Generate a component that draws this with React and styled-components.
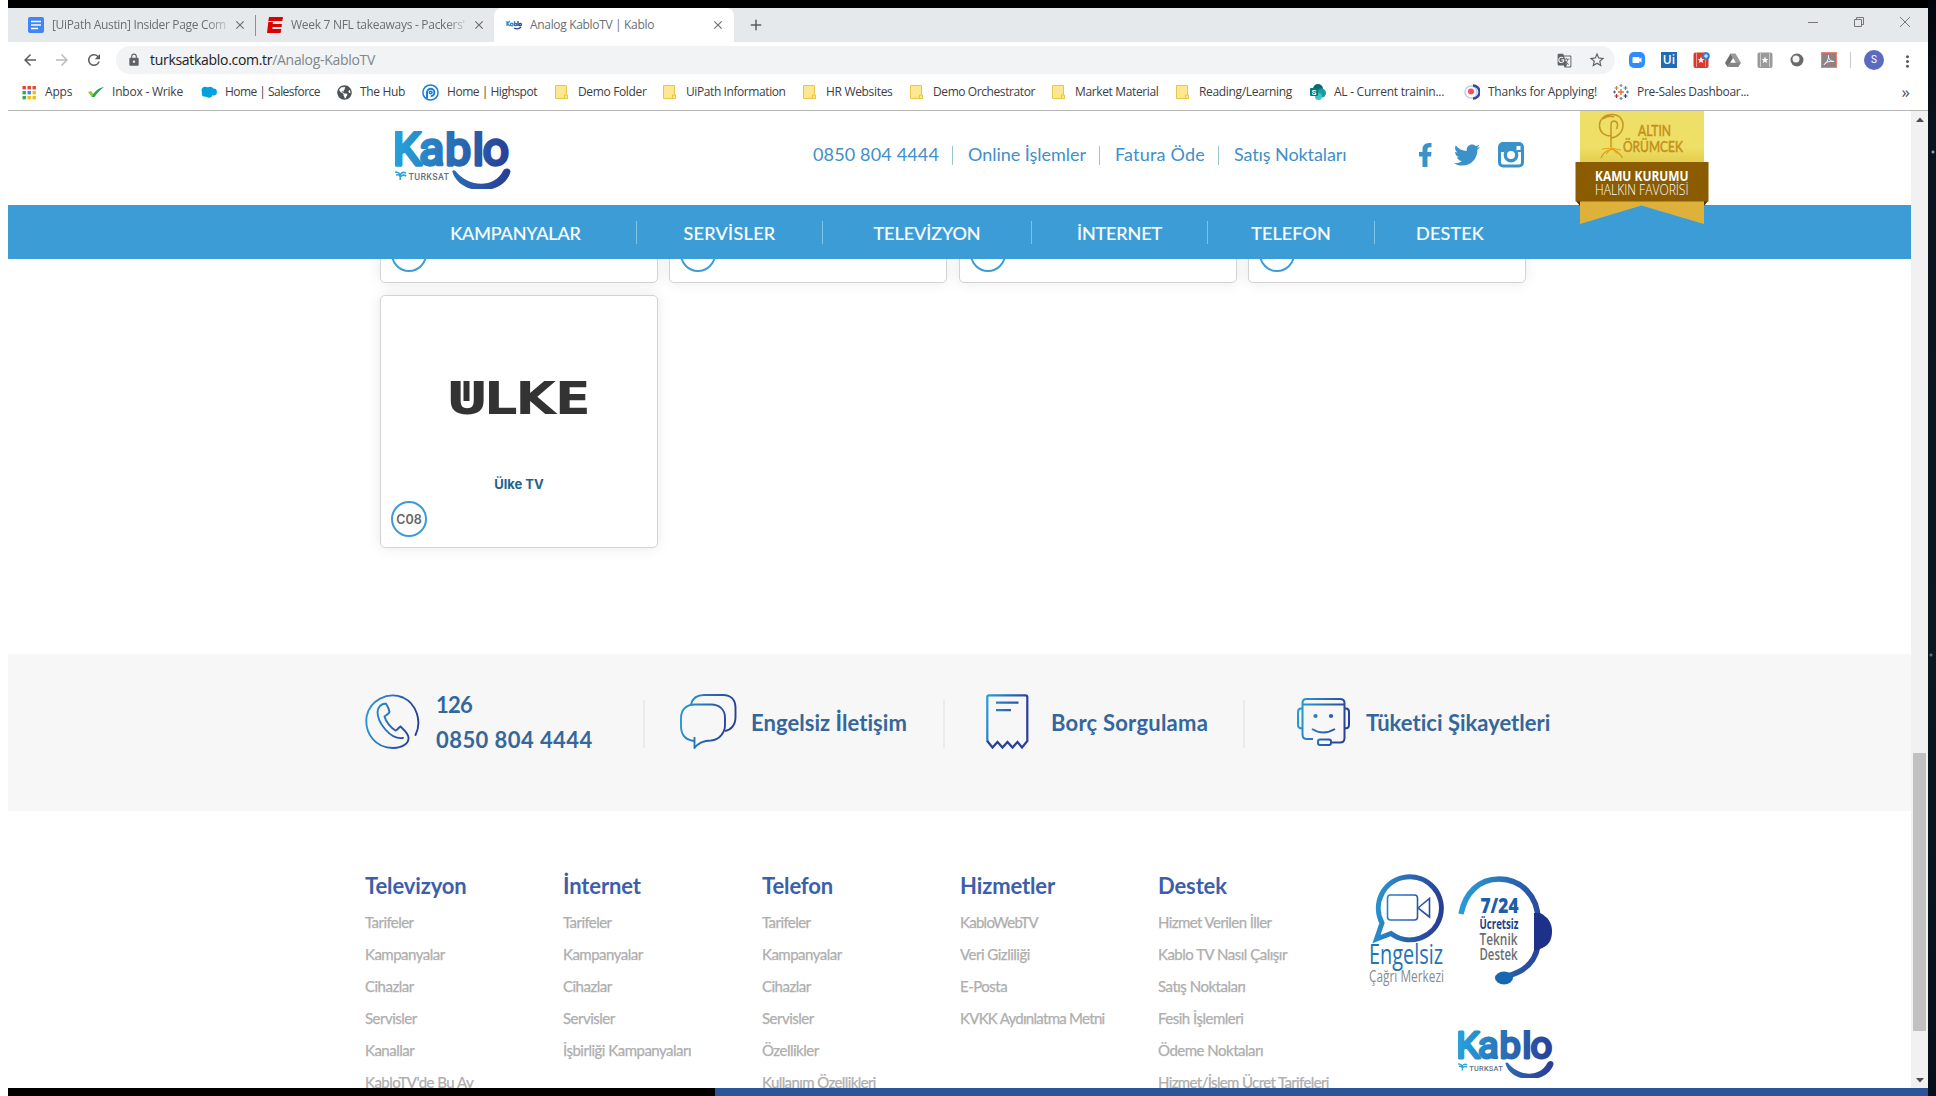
import React from "react";
import styled, { createGlobalStyle } from "styled-components";
import { FaTwitter, FaGlobeAmericas } from "react-icons/fa";
import { MdArrowBack, MdArrowForward, MdRefresh, MdLock, MdStarBorder, MdGTranslate, MdMoreVert, MdClose, MdAdd, MdVideocam } from "react-icons/md";

const ui = `"Open Sans", "Noto Sans", sans-serif`;
const site = `Lato, "Open Sans", sans-serif`;

const GlobalStyle = createGlobalStyle`
  * { box-sizing: border-box; }
  body { margin: 0; background: #fff; overflow: hidden; }
  svg { display: block; flex: none; }
`;

/* ---------- desktop and window ---------- */
const Desktop = styled.div`
  width: 1936px;
  height: 1096px;
  padding-left: 8px;
  display: grid;
  grid-template: 8px 1080px 8px / 1920px 8px;
  background: #fff;
  overflow: hidden;
`;
const TopEdge = styled.div`background: #000;`;
const SideEdge = styled.div`
  grid-column: 2;
  grid-row: 1 / 4;
  background: radial-gradient(circle at 5px 152px, #8b98a5 0 1px, transparent 2px),
    radial-gradient(circle at 3px 655px, #5b6b7b 0 1px, transparent 2px),
    linear-gradient(#02060c, #0a141f 12%, #0a1824 60%, #06101a);
`;
const BottomEdge = styled.div`
  display: flex;
  background: #2a5599;
  &::before { content: ""; width: 707px; background: #000; }
`;
const Window = styled.main`
  display: flex;
  flex-direction: column;
  overflow: hidden;
  background: #fff;
`;

/* ---------- tab strip ---------- */
const TabStrip = styled.div`
  height: 34px;
  display: flex;
  background: #e6e9ec;
  font: 12px/34px ${ui};
  color: #6b6f73;
`;
const Tab = styled.div`
  width: ${(p) => p.$w}px;
  padding: 0 8px 0 ${(p) => p.$pad}px;
  display: flex;
  align-items: center;
  gap: 8px;
  ${(p) => p.$active && `
    padding-right: 9px; background: #fff; border-radius: 8px 8px 0 0;
  `}
`;
const TabTitle = styled.span`
  flex: 1;
  margin-right: -3px;
  white-space: nowrap;
  letter-spacing: ${(p) => p.$ls}px;
  ${(p) => p.$fade && `mask-image: linear-gradient(90deg, #000 88%, rgba(0,0,0,.2) 100%);`}
`;
const TabDivider = styled.i`
  width: 1px;
  height: 21px;
  align-self: center;
  background: #8d9196;
`;
const NewTab = styled.div`
  flex: 1;
  padding-left: 13px;
  display: flex;
  align-items: center;
  color: #5a5e63;
`;
const WindowButtons = styled.div`
  display: flex;
  gap: 34px;
  padding: 8px 17px 0 0;
`;

/* ---------- toolbar ---------- */
const Toolbar = styled.div`
  height: 36px;
  display: flex;
  align-items: center;
  padding: 0 13px 0 13px;
`;
const NavButtons = styled.div`
  width: 95px;
  display: flex;
  gap: 14px;
  color: #5a5e63;
  svg:nth-child(2) { color: #babcbe; }
`;
const AddressBar = styled.div`
  width: 1499px;
  height: 28px;
  padding: 0 9px 0 11px;
  display: flex;
  align-items: center;
  border-radius: 14px;
  background: #f1f3f4;
  color: #5f6368;
`;
const Url = styled.span`
  flex: 1;
  padding-left: 9px;
  font: 14px/28px ${ui};
  letter-spacing: -0.3px;
  color: #80868b;
  b { font-weight: 400; color: #202124; }
`;
const AddressActions = styled.div`
  display: flex;
  align-items: center;
  gap: 16px;
`;
const Extensions = styled.div`
  display: flex;
  align-items: center;
  gap: 16px;
  padding-left: 14px;
`;
const Ext = styled.div`
  width: 16px;
  height: 16px;
  display: grid;
  place-items: center;
  border-radius: ${(p) => p.$r || 0}px;
  background: ${(p) => p.$bg || "transparent"};
  color: #fff;
  font: 600 12px/16px ${ui};
`;
const ToolbarDivider = styled.i`
  width: 1px;
  height: 16px;
  margin: 0 -3px 0 -3px;
  background: #c9ccd0;
`;
const Avatar = styled.div`
  width: 20px;
  height: 20px;
  margin-right: -2px;
  border-radius: 50%;
  background: #5c6bc0;
  color: #fff;
  font: 10px/20px Roboto, sans-serif;
  text-align: center;
`;

/* ---------- bookmarks ---------- */
const Bookmarks = styled.div`
  height: 33px;
  padding: 0 18px 4px 13px;
  display: flex;
  align-items: center;
  border-bottom: 1px solid #b5b5b5;
  font: 12px/26px ${ui};
  color: #3c4043;
`;
const Bookmark = styled.div`
  width: ${(p) => p.$w}px;
  display: flex;
  align-items: center;
  gap: 8px;
  white-space: nowrap;
  letter-spacing: ${(p) => p.$ls}px;
`;
const More = styled.span`
  margin-left: auto;
  font-size: 17px;
  color: #4d5155;
`;

/* ---------- page frame ---------- */
const Viewport = styled.div`
  flex: 1;
  min-height: 0;
  display: grid;
  grid-template-columns: 1903px 17px;
`;
const Page = styled.div`
  position: relative;
  overflow: hidden;
  font-family: ${site};
`;
const Scrollbar = styled.div`
  display: flex;
  flex-direction: column;
  align-items: center;
  padding: 6px 0 5px;
  background: #f1f1f1;
`;
const Thumb = styled.div`
  width: 13px;
  height: 278px;
  margin: 631px 0 auto;
  background: #c1c1c1;
`;

/* ---------- site header ---------- */
const Header = styled.header`
  height: 94px;
  padding: 20px 0 0 387px;
  display: flex;
`;
const TopLinks = styled.nav`
  display: flex;
  margin-left: 287px;
  padding-top: 10px;
  font-size: 18px;
  color: #3f90c8;
`;
const TopLink = styled.a`
  height: 28px;
  line-height: 26px;
  width: ${(p) => p.$w}px;
  padding-left: 15px;
  white-space: nowrap;
  letter-spacing: ${(p) => p.$ls}px;
`;
const LinkRule = styled.i`
  width: 1px;
  height: 19px;
  margin-top: 5px;
  background: #9cc9c4;
`;
const Social = styled.div`
  display: flex;
  align-items: flex-start;
  gap: 18px;
  padding-top: 11px;
  margin-left: 60px;
  color: #3a92c8;
`;
const MainNav = styled.nav`
  height: 54px;
  padding-left: 387px;
  display: flex;
  align-items: center;
  background: #3c9dd6;
`;
const MainNavItem = styled.a`
  width: ${(p) => p.$w}px;
  height: 23px;
  line-height: 25px;
  border-right: ${(p) => (p.$last ? 0 : "1px solid #7fc3e6")};
  text-align: center;
  font-size: 18px;
  letter-spacing: ${(p) => p.$ls}px;
  color: #fff;
  -webkit-text-stroke: 0.2px #fff;
`;
const Award = styled.div`
  position: absolute;
  left: 1567px;
  top: 0;
`;

/* ---------- channels ---------- */
const Channels = styled.section`
  height: 395px;
  overflow: hidden;
  padding-left: 372px;
`;
const CardGrid = styled.div`
  width: 1146px;
  margin-top: -229px;
  display: grid;
  grid-template-columns: repeat(4, 278px);
  justify-content: space-between;
  row-gap: 12px;
`;
const Card = styled.article`
  height: 253px;
  padding: 0 10px 10px;
  display: flex;
  flex-direction: column;
  align-items: center;
  justify-content: flex-end;
  border: 1px solid #d3d3d3;
  border-radius: 5px;
  background: #fff;
  box-shadow: 0 0 14px rgba(0, 0, 0, 0.09);
`;
const ChannelName = styled.h4`
  margin: 59px 0 8px;
  font: bold 13px/18px Inter, sans-serif;
  color: #22628f;
`;
const ChannelNo = styled.span`
  width: 36px;
  height: 36px;
  align-self: flex-start;
  border: 2px solid #3c9dd6;
  border-radius: 50%;
  font: 600 12.5px/33px Inter, sans-serif;
  text-align: center;
  color: #666;
`;

/* ---------- contact band ---------- */
const Band = styled.section`
  height: 157px;
  padding: 40px 0 0 357px;
  display: flex;
  background: #f7f7f7;
`;
const BandItem = styled.div`
  width: ${(p) => p.$w}px;
  height: 56px;
  display: flex;
  align-items: center;
  gap: ${(p) => p.$gap}px;
`;
const BandRule = styled.i`
  width: 2px;
  height: 48px;
  margin: 6px ${(p) => p.$after}px 0 0;
  background: #ebebeb;
`;
const BandText = styled.div`
  font-weight: 700;
  font-size: 22px;
  line-height: 35px;
  letter-spacing: ${(p) => p.$ls}px;
  white-space: nowrap;
  color: #34679c;
`;
const ShortNumber = styled.div`
  letter-spacing: -0.8px;
`;

/* ---------- footer ---------- */
const Footer = styled.footer`
  padding: 58px 0 0 357px;
  display: flex;
`;
const FooterCol = styled.div`
  width: ${(p) => p.$w}px;
  display: flex;
  flex-direction: column;
`;
const FooterTitle = styled.h3`
  margin: 0 0 4px;
  font-size: 22px;
  line-height: 33px;
  letter-spacing: -0.12px;
  color: #3d5fab;
`;
const FooterLink = styled.a`
  font-size: 15px;
  line-height: 32px;
  letter-spacing: ${(p) => p.$ls || -0.5}px;
  white-space: nowrap;
  color: #aeaeae;
  -webkit-text-stroke: 0.25px #aeaeae;
`;
const FooterLogos = styled.div`
  width: 220px;
  padding: 4px 0 0 13px;
  display: flex;
  flex-wrap: wrap;
  column-gap: 14px;
  align-content: flex-start;
  svg:last-child { margin: 43px 0 0 89px; }
`;

/* ---------- drawings ---------- */
const Gradient = ({ id, w = 54 }) => (
  <linearGradient id={id} gradientUnits="userSpaceOnUse" x1="0" x2={w} y1="0" y2="12">
    <stop offset="0" stopColor="#26a3dc" />
    <stop offset="0.5" stopColor="#2b6fb6" />
    <stop offset="1" stopColor="#283f97" />
  </linearGradient>
);
const KabloLogo = ({ w, h, id }) => (
  <svg width={w} height={h} viewBox="0 0 115 58" preserveAspectRatio="none">
    <Gradient id={id} w={115} />
    <g fill={`url(#${id})`} stroke={`url(#${id})`} strokeWidth="3.400" strokeLinejoin="round">
      <text x="-2.500 24 49.800 77 87" y="34.300" fontFamily="Roboto, sans-serif" fontWeight="400" fontSize="45.500">Kablo</text>
      <path stroke="none" d="M57 41C64 65 107 66 114.500 41C114.500 37 109 36 107 40C99 57 73 57 60 40C58.500 38.500 56.500 39 57 41Z" />
    </g>
    <path d="M0 41c3 0 4.500 1 5 3c1-2 3-3.500 6-2M5.200 49v-5M1 44c2-.5 3.500 0 4 1.500M11 45c-2-1.500-4-1-5 .5" fill="none" stroke="#2aa4dc" strokeWidth="1.600" />
    <text x="13.500" y="49" fontFamily="Roboto, sans-serif" fontWeight="500" fontSize="8.800" textLength="40" fill="#64727f">TURKSAT</text>
  </svg>
);
const TabIcon = () => (
  <svg width="16" height="16" fill="none" strokeWidth="1.300"><path d="M1 4v5M3.800 4L1.500 6.500L3.800 9M8.500 4v5" stroke="#2a8fce" /><circle cx="5.800" cy="7.500" r="1.300" stroke="#2a80c4" /><circle cx="9.700" cy="7.500" r="1.200" stroke="#2b6fb6" /><path d="M12 4v5M8 11q4 2 7-1" stroke="#283f97" /><circle cx="14.200" cy="7.500" r="1.200" stroke="#283f97" /></svg>
);
const GDocs = () => (
  <svg width="16" height="16"><rect width="16" height="16" rx="2" fill="#4285f4" /><path d="M3 4.500h10M3 8h10M3 11.500h7" stroke="#fff" strokeWidth="1.600" /></svg>
);
const Espn = () => (
  <svg width="16" height="16"><path d="M2 0H16L15.300 4H1.300ZM1.300 5H6L5.700 7H15L14.500 10H5.500L5.300 12H14.300L13.600 16H0Z" fill="#d00" /></svg>
);
const AppsGrid = () => (
  <svg width="16" height="16">
    {["#ea4335", "#ea4335", "#ea4335", "#34a853", "#4285f4", "#fbbc05", "#34a853", "#fbbc05", "#fbbc05"].map((c, i) => (
      <rect key={i} x={1.500 + (i % 3) * 5} y={2 + Math.floor(i / 3) * 5} width="3.400" height="3.400" fill={c} />
    ))}
  </svg>
);
const Check = () => (
  <svg width="16" height="16"><path d="M0 8l3-1 3 3.500L3.800 13Z" fill="#9acb3c" /><path d="M3.800 13C6 8 10 4 16 3C12 6 9 9 6.500 13Z" fill="#1fa84a" /></svg>
);
const Cloud = () => (
  <svg width="16" height="16" fill="#00a1e0"><circle cx="4.300" cy="6.500" r="3.700" /><circle cx="9" cy="6" r="3.300" /><circle cx="12.500" cy="8" r="3.400" /><circle cx="4" cy="9.500" r="3.200" /><circle cx="8" cy="10.500" r="3.300" /></svg>
);
const Highspot = () => (
  <svg width="17" height="17" viewBox="0 0 17 17" fill="none" stroke="#1c7fd6"><circle cx="8.500" cy="8.500" r="7.600" strokeWidth="1.500" /><path d="M5 14.500V8.500a3.700 3.700 0 1 1 3.700 3.700" strokeWidth="2" /><circle cx="8.700" cy="8.500" r="1.300" strokeWidth="1.600" /></svg>
);
const Folder = () => (
  <svg width="16" height="16"><path d="M1.500 1.500h11v9.500l1 3.500h-12z" fill="#ffe690" stroke="#e9c647" /><path d="M10.500 14.500v-3.500h3v3.500z" fill="#ffe690" stroke="#e9c647" /></svg>
);
const SharePoint = () => (
  <svg width="16" height="16"><circle cx="8" cy="5" r="5" fill="#036c70" /><circle cx="11.500" cy="9" r="4.500" fill="#1a9ba1" /><circle cx="8.500" cy="12.500" r="3.500" fill="#37c6d0" /><rect y="4" width="8" height="8" rx="1" fill="#03787c" /><text x="1.500" y="11" fontSize="8" fontWeight="700" fill="#fff" fontFamily="Roboto, sans-serif">S</text></svg>
);
const Thanks = () => (
  <svg width="16" height="16" fill="none"><circle cx="7" cy="8" r="6" stroke="#c7cdea" strokeWidth="1.500" /><path d="M9 1.500a6.500 6.500 0 0 1 0 13" stroke="#31489f" strokeWidth="2.400" /><circle cx="7" cy="7.500" r="3" fill="#f0525a" /></svg>
);
const Tableau = () => (
  <svg width="16" height="16" fill="none" strokeWidth="1.200"><path d="M8 5v6M5 8h6" stroke="#e8762d" strokeWidth="1.500" /><path d="M8 0v3M6.500 1.500h3" stroke="#7199a6" /><path d="M8 13v3M6.500 14.500h3M14.500 6.500v3M13 8h3" stroke="#5b879b" /><path d="M0 8h3M1.500 6.500v3" stroke="#5b6591" /><path d="M3.500 2v4M1.500 4h4" stroke="#c9803f" /><path d="M12.500 2v4M10.500 4h4" stroke="#59879b" /><path d="M3.500 10v4M1.500 12h4" stroke="#c72035" /><path d="M12.500 10v4M10.500 12h4" stroke="#1f457e" /></svg>
);
const BookExt = ({ c, badge }) => (
  <svg width="17" height="17" viewBox="0 0 17 17"><rect x=".5" y=".5" width="15" height="15.500" rx="2" fill={c} /><path d="M3.500 1v14M12.500 1v14" stroke="#fff" strokeWidth=".6" opacity=".8" /><path d="M8 4.500l1 2.400 2.500.1-2 1.600.8 2.500L8 9.700l-2.300 1.400.8-2.500-2-1.600L7 6.900z" fill="#fff" />{badge && <g><circle cx="13" cy="4" r="3.800" fill="#2a86d8" /><path d="M13 2v4M11 4h4" stroke="#fff" /></g>}</svg>
);
const Drive = () => (
  <svg width="16" height="16"><path d="M5.500 1.500h5L16 11h-5z" fill="#9a9a9a" /><path d="M5.500 1.500L0 11l2.700 4L8 6z" fill="#6e6e6e" /><path d="M5.200 10.800H16L13.300 15H2.700z" fill="#858585" /></svg>
);
const Pdf = () => (
  <svg width="16" height="16"><rect x=".5" y=".5" width="15" height="15" fill="#8d8284" stroke="#ee8073" /><path d="M3 12.500C5 12 8 7 7.500 3.500C7 6 9.500 10 13 9.500C10 8.500 5 10 3 12.500Z" fill="none" stroke="#fff" /></svg>
);
const Facebook = () => (
  <svg width="17" height="26"><path d="M3.500 25V14.500H0V10H3.500V7.500Q3.500 1 10 1H12.500V5.300H10.500Q8.500 5.300 8.500 7.300V10H12.500L12 14.500H8.500V25Z" fill="#3a92c8" /></svg>
);
const Instagram = () => (
  <svg width="26" height="26" fill="none" stroke="#3a92c8"><rect x="1.500" y="1.500" width="23" height="22.500" rx="3.500" strokeWidth="3" /><path d="M2 2h22v8h-4.500a7.500 7.500 0 0 0-13 0H2z" fill="#3a92c8" stroke="none" /><circle cx="13" cy="13" r="5.700" strokeWidth="3.400" fill="#fff" /><rect x="18.500" y="4" width="4" height="4" fill="#fff" stroke="none" /></svg>
);
const AwardBadge = () => (
  <svg width="134" height="114" fontFamily='"Open Sans", sans-serif'>
    <defs>
      <linearGradient id="gold" x2="0" y2="1"><stop offset="0" stopColor="#eedf6a" /><stop offset=".7" stopColor="#eedf66" /><stop offset="1" stopColor="#e3cd4c" /></linearGradient>
    </defs>
    <rect x="5" width="124" height="52" fill="url(#gold)" />
    <path d="M5 88V113L66.500 94.500L129 113V88Z" fill="#deb23a" />
    <path d="M1 90h4v5zM133 90h-4v5z" fill="#4f3300" />
    <rect x=".5" y="51" width="133" height="39.500" fill="#8b5b00" />
    <path d="M36 36V14Q36 10 39 10Q43 10.500 42.500 15L41.500 18M36 25C28 25 24.500 20 24.500 14.500C24.500 8 30 3.500 37 3.500C44 3.500 48 8 48 14C48 21 43 26 36 27M28 8C31 5.500 35 4.500 39 6" fill="none" stroke="#c99520" strokeWidth="1.500" />
    <path d="M26 47c2-5 6-8 10.500-8.500s8 4 11 8.500" fill="none" stroke="#cf9a22" strokeWidth="1.200" />
    <path d="M27 38L36.500 37L46 39M31 43L36.500 37L43 43M36.500 29V37" fill="none" stroke="#f0a51a" strokeWidth="1.200" />
    <text x="63" y="25" fontSize="14.500" fontFamily={site} textLength="33" lengthAdjust="spacingAndGlyphs" fill="#c58f1c" stroke="#c58f1c" strokeWidth=".5">ALTIN</text>
    <text x="48" y="41" fontSize="14.500" fontFamily={site} textLength="60" lengthAdjust="spacingAndGlyphs" fill="#c58f1c" stroke="#c58f1c" strokeWidth=".5">ÖRÜMCEK</text>
    <text x="20" y="69.500" fontSize="14.500" fontWeight="700" textLength="93.500" lengthAdjust="spacingAndGlyphs" fill="#fff">KAMU KURUMU</text>
    <text x="20" y="84" fontSize="14.500" fontWeight="300" textLength="93.500" lengthAdjust="spacingAndGlyphs" fill="#fff">HALKIN FAVORİSİ</text>
  </svg>
);
const UlkeLogo = () => (
  <svg width="138" height="36" fill="#333">
    <text transform="scale(1.160 1)" y="34" fontFamily='"DejaVu Sans", sans-serif' fontWeight="700" fontSize="45" x="-3.500 29.500 56.500 90.500">ULKE</text>
    <rect x="13.500" y="1" width="6" height="20" />
  </svg>
);
const Phone = () => (
  <svg width="56" height="56" fill="none" stroke="url(#gPhone)" strokeWidth="1.900" strokeLinecap="round">
    <Gradient id="gPhone" />
    <path d="M50.500 41C57 28 52 10 38 3.500C22-3 5 7 1.700 22C-1 40 11 54 28 54C38 54 44 49 43.500 43.500C43 39 39 36 35.500 32.500C34 33 32.500 36 30.500 36.500C26 34 21 28 19.500 22.500C21 21 24 20 24.500 18C24 15 22.500 12 21 9.800C17 9 12.500 13 12.500 18C12.500 28 25 46 38 44" />
  </svg>
);
const Chat = () => (
  <svg width="57" height="56" fill="none" stroke="url(#gChat)" strokeWidth="1.900" strokeLinejoin="round">
    <Gradient id="gChat" />
    <path d="M14.500 43V54C19 48 24 46.500 31 46.500C40 46 45 38 45 31V24C45 15 39 10.500 31 10.500H15C6 10.500 1 16 1 24V32C1 41 6 46 14 47" />
    <path d="M11 10.500C12.500 4 17 1 24 1H43C51 1 55.500 6 55.500 14V23C55.500 31 51 36 45 37" />
  </svg>
);
const Receipt = () => (
  <svg width="43" height="56" fill="none" stroke="url(#gReceipt)" strokeWidth="2.200">
    <Gradient id="gReceipt" w={42} />
    <path d="M1.300 48V3Q1.300 1.300 3 1.300H39.500Q41.300 1.300 41.300 3V48M10 8.700H32.500M10 16.200H25" />
    <path d="M1.300 47L6.500 53.500L11.500 48L16.500 53.500L21.500 48L26.500 53.500L31.500 48L36 53.500L41.300 47" stroke="#2b4199" />
  </svg>
);
const Robot = () => (
  <svg width="53" height="49" fill="none" stroke="url(#gRobot)" strokeWidth="2">
    <Gradient id="gRobot" />
    <path d="M16 41H10Q5.500 41 5.500 36.500V5Q5.500 1 9.500 1H43Q47.500 1 47.500 5V40Q47.500 44.500 43 44.500H34M5.500 6.500H47.500M5.500 10.500H4Q1 10.500 1 14V27Q1 30.500 5.500 30.500M47.500 10.500H49Q52 10.500 52 14V27Q52 30.500 47.500 30.500M15 31Q26 38 38 31" />
    <rect x="21" y="41.500" width="13" height="5.500" rx="2" />
    <ellipse cx="18.500" cy="18" rx="2.200" ry="2" fill="#2f80c1" stroke="none" /><ellipse cx="34" cy="18" rx="2.200" ry="2" fill="#2f62ae" stroke="none" />
  </svg>
);
const CallCentre = () => (
  <svg width="75" height="114">
    <Gradient id="gCall" w={74} />
    <g fill="none" stroke="url(#gCall)">
      <path d="M13 50A31.500 31.500 0 1 1 22 60.500L7.500 66Z" strokeWidth="5" />
      <rect x="18.500" y="22" width="30" height="25" rx="3" strokeWidth="1.600" />
      <path d="M49 35L60.500 25.500V44Z" strokeWidth="1.600" />
    </g>
    <text x="0" y="90.500" fontFamily='"Open Sans", sans-serif' fontWeight="400" fontSize="27.500" textLength="74" lengthAdjust="spacingAndGlyphs" fill="#2473b5">Engelsiz</text>
    <text x="0" y="109" fontFamily='"Open Sans", sans-serif' fontWeight="400" fontSize="16" textLength="75" lengthAdjust="spacingAndGlyphs" fill="#888c90">Çağrı Merkezi</text>
  </svg>
);
const SupportDesk = () => (
  <svg width="95" height="114" viewBox="0 -3 95 114" fontFamily='"Open Sans", sans-serif'>
    <Gradient id="gTeknik" w={94} />
    <path d="M3 38C7 17 21 3 41 3C63 3 80 20 80 44V70C77 86 66 96 49 100" fill="none" stroke="url(#gTeknik)" strokeWidth="5.500" />
    <path d="M76 37H82C90 41 94 47 94 55.500C94 65 90 70 82 73L76 75Z" fill="#1d3188" />
    <ellipse cx="46" cy="102" rx="9" ry="6.500" fill="#1768b3" />
    <text x="22.500" y="37" fontWeight="800" fontSize="21.500" textLength="38" lengthAdjust="spacingAndGlyphs" fill="#1b5ea9">7/24</text>
    <text x="21.500" y="53" fontWeight="700" fontSize="15" textLength="39" lengthAdjust="spacingAndGlyphs" fill="#1c3f8b">Ücretsiz</text>
    <text x="21.500" y="69" fontWeight="600" fontSize="16" textLength="38" lengthAdjust="spacingAndGlyphs" fill="#6a6e72">Teknik</text>
    <text x="21.500" y="84" fontWeight="600" fontSize="16" textLength="38" lengthAdjust="spacingAndGlyphs" fill="#6a6e72">Destek</text>
  </svg>
);
const Arrow = ({ down }) => (
  <svg width="8" height="5"><path d={down ? "M0 0H8L4 4.500Z" : "M4 .5L8 5H0Z"} fill="#4c4c4c" /></svg>
);

/* ---------- data ---------- */
const bookmarks = [
  ["Apps", 67, -0.2, <AppsGrid />],
  ["Inbox - Wrike", 113, -0.21, <Check />],
  ["Home | Salesforce", 136, -0.54, <Cloud />],
  ["The Hub", 85, -0.34, <FaGlobeAmericas size={15} color="#4d5257" />],
  ["Home | Highspot", 132, -0.47, <Highspot />],
  ["Demo Folder", 108, -0.35, <Folder />],
  ["UiPath Information", 140, -0.41, <Folder />],
  ["HR Websites", 107, -0.32, <Folder />],
  ["Demo Orchestrator", 142, -0.41, <Folder />],
  ["Market Material", 124, -0.36, <Folder />],
  ["Reading/Learning", 135, -0.33, <Folder />],
  ["AL - Current trainin...", 154, -0.27, <SharePoint />],
  ["Thanks for Applying!", 149, -0.24, <Thanks />],
  ["Pre-Sales Dashboar...", 140, -0.32, <Tableau />],
];
const topLinks = [
  ["0850 804 4444", 154, 0.15],
  ["Online İşlemler", 146, -0.03],
  ["Fatura Öde", 118, 0.19],
  ["Satış Noktaları", 140, -0.1],
];
const mainNav = [
  ["KAMPANYALAR", 242, -0.09],
  ["SERVİSLER", 186, 0.33],
  ["TELEVİZYON", 209, -0.04],
  ["İNTERNET", 176, -0.11],
  ["TELEFON", 167, 0.09],
  ["DESTEK", 150, 0.2],
];
const columns = [
  ["Televizyon", 198, ["Tarifeler", "Kampanyalar", "Cihazlar", "Servisler", "Kanallar", "KabloTV'de Bu Ay"]],
  ["İnternet", 199, ["Tarifeler", "Kampanyalar", "Cihazlar", "Servisler", "İşbirliği Kampanyaları"]],
  ["Telefon", 198, ["Tarifeler", "Kampanyalar", "Cihazlar", "Servisler", "Özellikler", "Kullanım Özellikleri"]],
  ["Hizmetler", 198, ["KabloWebTV", "Veri Gizliliği", "E-Posta", "KVKK Aydınlatma Metni"]],
  ["Destek", 198, ["Hizmet Verilen İller", "Kablo TV Nasıl Çalışır", "Satış Noktaları", "Fesih İşlemleri", "Ödeme Noktaları", "Hizmet/İşlem Ücret Tarifeleri"]],
];
const tracking = {
  KabloWebTV: -0.72,
  "KVKK Aydınlatma Metni": -0.72,
  Tarifeler: -0.56,
  "Hizmet Verilen İller": -0.57,
  "Kullanım Özellikleri": -0.6,
  "Hizmet/İşlem Ücret Tarifeleri": -0.63,
};

export default function App() {
  return (
    <Desktop>
      <GlobalStyle />
      <TopEdge />
      <SideEdge />
      <Window>
        <TabStrip>
          <Tab $w={247} $pad={20}>
            <GDocs />
            <TabTitle $ls={-0.33} $fade>[UiPath Austin] Insider Page Com</TabTitle>
            <MdClose size={14} />
          </Tab>
          <TabDivider />
          <Tab $w={238} $pad={11}>
            <Espn />
            <TabTitle $ls={-0.29} $fade>Week 7 NFL takeaways - Packers'</TabTitle>
            <MdClose size={14} />
          </Tab>
          <Tab $w={240} $pad={12} $active>
            <TabIcon />
            <TabTitle $ls={-0.33}>Analog KabloTV | Kablo</TabTitle>
            <MdClose size={14} />
          </Tab>
          <NewTab><MdAdd size={18} /></NewTab>
          <WindowButtons>
            <svg width="12" height="12"><path d="M1 6.500h10" stroke="#777" /></svg>
            <svg width="12" height="12" fill="none" stroke="#777"><path d="M1.500 3.500h7v7h-7zM3.500 3.500v-2h7v7h-2" /></svg>
            <svg width="12" height="12" stroke="#777"><path d="M1 1l10 10M11 1L1 11" /></svg>
          </WindowButtons>
        </TabStrip>
        <Toolbar>
          <NavButtons>
            <MdArrowBack size={18} /><MdArrowForward size={18} /><MdRefresh size={18} />
          </NavButtons>
          <AddressBar>
            <MdLock size={14} />
            <Url><b>turksatkablo.com.tr</b>/Analog-KabloTV</Url>
            <AddressActions><MdGTranslate size={15} /><MdStarBorder size={18} /></AddressActions>
          </AddressBar>
          <Extensions>
            <Ext $bg="#2d8cff" $r={5}><MdVideocam size={12} /></Ext>
            <Ext $bg="#1f6bb4">Ui</Ext>
            <Ext><BookExt c="#d93a2b" badge /></Ext>
            <Ext><Drive /></Ext>
            <Ext><BookExt c="#9a9a9a" /></Ext>
            <Ext><svg width="14" height="14"><circle cx="7" cy="7" r="6.500" fill="#6a6a6a" /><circle cx="6" cy="6" r="3.500" fill="#f5f5f5" /></svg></Ext>
            <Ext><Pdf /></Ext>
            <ToolbarDivider />
            <Avatar>S</Avatar>
            <Ext><MdMoreVert size={19} color="#5a5e63" /></Ext>
          </Extensions>
        </Toolbar>
        <Bookmarks>
          {bookmarks.map(([name, w, ls, icon]) => (
            <Bookmark key={name} $w={w} $ls={ls}>{icon}{name}</Bookmark>
          ))}
          <More>»</More>
        </Bookmarks>
        <Viewport>
          <Page>
            <Header>
              <KabloLogo w={116} h={58} id="gKablo" />
              <TopLinks>
                {topLinks.map(([name, w, ls], i) => (
                  <React.Fragment key={name}>
                    {i > 0 && <LinkRule />}
                    <TopLink $w={w} $ls={ls}>{name}</TopLink>
                  </React.Fragment>
                ))}
              </TopLinks>
              <Social><Facebook /><FaTwitter size={26} /><Instagram /></Social>
            </Header>
            <MainNav>
              {mainNav.map(([name, w, ls], i) => (
                <MainNavItem key={name} $w={w} $ls={ls} $last={i === 5}>{name}</MainNavItem>
              ))}
            </MainNav>
            <Award><AwardBadge /></Award>
            <Channels>
              <CardGrid>
                {[4, 5, 6, 7].map((n) => (
                  <Card key={n}><ChannelNo /></Card>
                ))}
                <Card>
                  <UlkeLogo />
                  <ChannelName>Ülke TV</ChannelName>
                  <ChannelNo>C08</ChannelNo>
                </Card>
              </CardGrid>
            </Channels>
            <Band>
              <BandItem $w={278} $gap={15}>
                <Phone />
                <BandText $ls={0.43}><ShortNumber>126</ShortNumber>0850 804 4444</BandText>
              </BandItem>
              <BandRule $after={35} />
              <BandItem $w={263} $gap={14}><Chat /><BandText $ls={0.05}>Engelsiz İletişim</BandText></BandItem>
              <BandRule $after={41} />
              <BandItem $w={257} $gap={22}><Receipt /><BandText $ls={0.23}>Borç Sorgulama</BandText></BandItem>
              <BandRule $after={52} />
              <BandItem $w={260} $gap={16}><Robot /><BandText $ls={0.02}>Tüketici Şikayetleri</BandText></BandItem>
            </Band>
            <Footer>
              {columns.map(([title, w, links]) => (
                <FooterCol key={title} $w={w}>
                  <FooterTitle>{title}</FooterTitle>
                  {links.map((l) => <FooterLink key={l} $ls={tracking[l]}>{l}</FooterLink>)}
                </FooterCol>
              ))}
              <FooterLogos>
                <CallCentre />
                <SupportDesk />
                <KabloLogo w={96} h={48} id="gKabloFoot" />
              </FooterLogos>
            </Footer>
          </Page>
          <Scrollbar><Arrow /><Thumb /><Arrow down /></Scrollbar>
        </Viewport>
      </Window>
      <BottomEdge />
    </Desktop>
  );
}
